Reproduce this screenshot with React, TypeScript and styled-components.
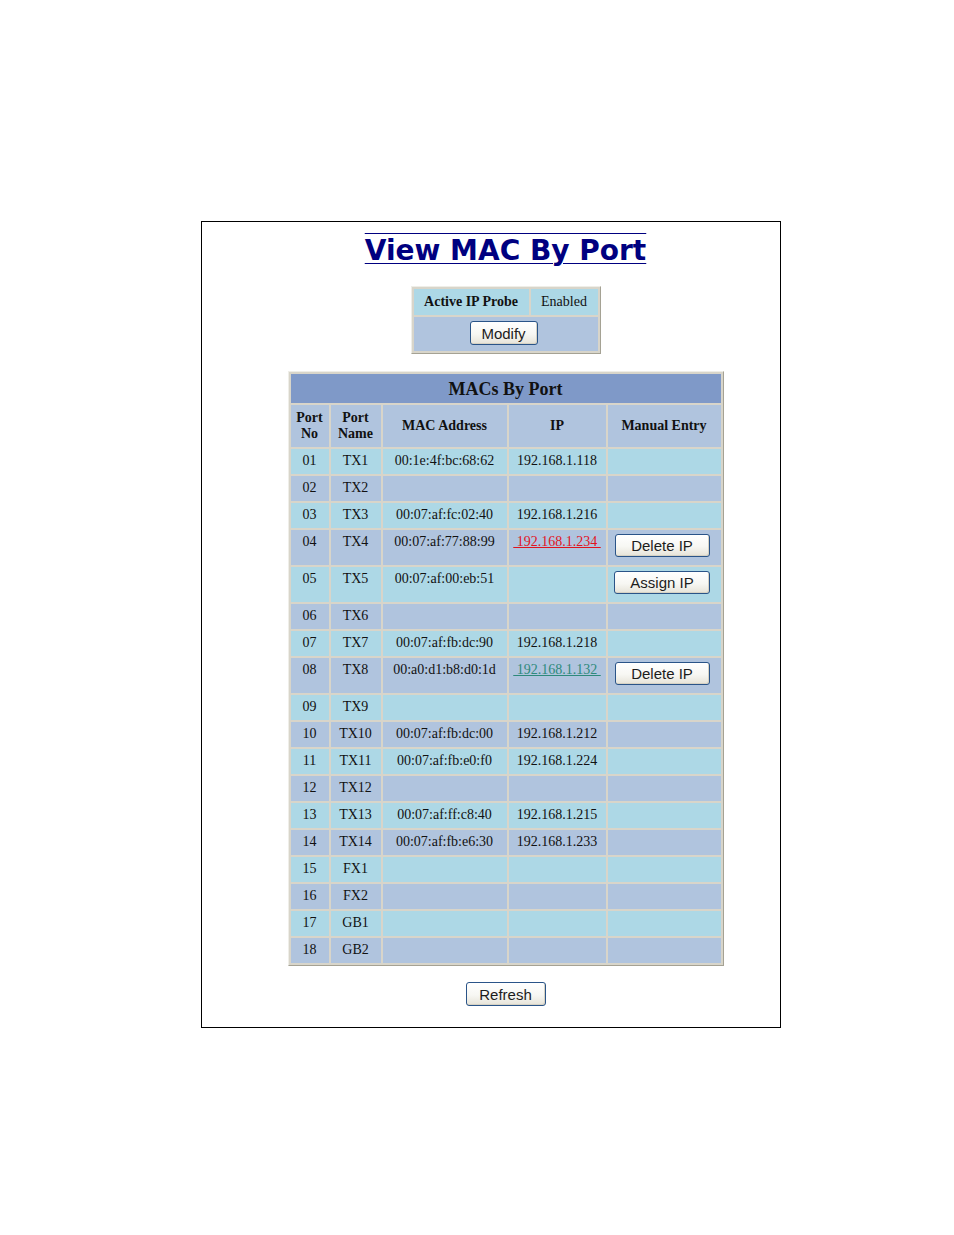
import React from "react";
import styled, { createGlobalStyle } from "styled-components";

const GlobalStyle = createGlobalStyle`
  html, body {
    margin: 0;
    padding: 0;
    background: #ffffff;
  }
  body {
    font-family: "Liberation Serif", "Times New Roman", serif;
    color: #000;
  }
`;

const LIGHT_BLUE = "#add8e6";
const STEEL_BLUE = "#b0c4de";
const TITLE_BLUE = "#7f99c8";

const Frame = styled.div`
  box-sizing: border-box;
  width: 580px;
  margin: 221px 0 0 201px;
  padding: 12px 0 21px 29px;
  border: 1px solid #000;
  display: flex;
  flex-direction: column;
  align-items: center;
`;

const PageTitle = styled.h1`
  margin: 0;
  font-family: "DejaVu Sans", Verdana, sans-serif;
  font-size: 28px;
  font-weight: bold;
  color: #000080;
  text-decoration: underline overline;
  text-decoration-thickness: 1px;
  text-underline-offset: 3px;
`;

const Grid = styled.table<{ $top: number }>`
  margin-top: ${(p) => p.$top}px;
  border-collapse: separate;
  border-spacing: 2px;
  background: #d8d5ca;
  border: 1px solid;
  border-color: #efeee8 #a5a294 #a5a294 #efeee8;
`;

const Cell = styled.td<{ $bg: string; $w?: number; $bold?: boolean }>`
  box-sizing: border-box;
  background: ${(p) => p.$bg};
  ${(p) => (p.$w ? `width: ${p.$w}px;` : "")}
  padding: 4px 2px 5px;
  font-size: 14px;
  line-height: 16px;
  font-weight: ${(p) => (p.$bold ? "bold" : "normal")};
  text-align: center;
  vertical-align: top;
  color: #111;
  white-space: nowrap;
`;

const HeadCell = styled(Cell).attrs({ as: "th" })`
  padding: 5px 2px;
  vertical-align: middle;
`;

const CaptionCell = styled.th`
  background: ${TITLE_BLUE};
  padding: 5px 2px 4px;
  font-size: 18px;
  line-height: 20px;
  font-weight: bold;
  color: #111;
  text-align: center;
`;

const ProbeCell = styled(Cell)`
  padding: 5px 4px;
  vertical-align: middle;
`;

const ActionCell = styled(Cell)`
  padding: 4px 9px 6px 5px;
`;

const Button = styled.button<{ $w: number }>`
  display: inline-block;
  vertical-align: top;
  box-sizing: border-box;
  width: ${(p) => p.$w}px;
  height: 24px;
  margin: 0;
  padding: 0;
  font-family: "Liberation Sans", Arial, sans-serif;
  font-size: 15px;
  color: #1c1c1c;
  border: 1px solid #2a5488;
  border-radius: 3px;
  background: linear-gradient(#ffffff 0%, #f7f7f3 55%, #e6e3d8 100%);
  box-shadow: inset -1px -1px 0 #d6d2c4;
  cursor: pointer;
`;

const RowButton = styled(Button)`
  height: 23px;
  margin: 0 0 2px;
`;

const IpLink = styled.a<{ $color: string }>`
  color: ${(p) => p.$color};
  text-decoration: underline;
  cursor: pointer;
`;

const RefreshBar = styled.div`
  margin-top: 16px;
  display: flex;
  justify-content: center;
`;

type Row = {
  no: string;
  name: string;
  mac?: string;
  ip?: string;
  link?: string;
  action?: string;
};

const rows: Row[] = [
  { no: "01", name: "TX1", mac: "00:1e:4f:bc:68:62", ip: "192.168.1.118" },
  { no: "02", name: "TX2" },
  { no: "03", name: "TX3", mac: "00:07:af:fc:02:40", ip: "192.168.1.216" },
  { no: "04", name: "TX4", mac: "00:07:af:77:88:99", ip: "192.168.1.234", link: "#e0141e", action: "Delete IP" },
  { no: "05", name: "TX5", mac: "00:07:af:00:eb:51", action: "Assign IP" },
  { no: "06", name: "TX6" },
  { no: "07", name: "TX7", mac: "00:07:af:fb:dc:90", ip: "192.168.1.218" },
  { no: "08", name: "TX8", mac: "00:a0:d1:b8:d0:1d", ip: "192.168.1.132", link: "#2e8a7c", action: "Delete IP" },
  { no: "09", name: "TX9" },
  { no: "10", name: "TX10", mac: "00:07:af:fb:dc:00", ip: "192.168.1.212" },
  { no: "11", name: "TX11", mac: "00:07:af:fb:e0:f0", ip: "192.168.1.224" },
  { no: "12", name: "TX12" },
  { no: "13", name: "TX13", mac: "00:07:af:ff:c8:40", ip: "192.168.1.215" },
  { no: "14", name: "TX14", mac: "00:07:af:fb:e6:30", ip: "192.168.1.233" },
  { no: "15", name: "FX1" },
  { no: "16", name: "FX2" },
  { no: "17", name: "GB1" },
  { no: "18", name: "GB2" },
];

function MacRow({ row, index }: { row: Row; index: number }) {
  const bg = index % 2 === 0 ? LIGHT_BLUE : STEEL_BLUE;
  return (
    <tr>
      <Cell $bg={bg}>{row.no}</Cell>
      <Cell $bg={bg}>{row.name}</Cell>
      <Cell $bg={bg}>{row.mac}</Cell>
      <Cell $bg={bg}>
        {row.link ? (
          <IpLink $color={row.link}>{`\u00a0${row.ip}\u00a0`}</IpLink>
        ) : (
          row.ip
        )}
      </Cell>
      {row.action ? (
        <ActionCell $bg={bg}>
          <RowButton $w={row.action === "Assign IP" ? 96 : 95}>{row.action}</RowButton>
        </ActionCell>
      ) : (
        <Cell $bg={bg} />
      )}
    </tr>
  );
}

export default function App() {
  return (
    <>
      <GlobalStyle />
      <Frame>
        <PageTitle>View MAC By Port</PageTitle>

        <Grid $top={19}>
          <tbody>
            <tr>
              <ProbeCell $bg={LIGHT_BLUE} $w={115} $bold>
                Active IP Probe
              </ProbeCell>
              <ProbeCell $bg={LIGHT_BLUE} $w={67}>
                Enabled
              </ProbeCell>
            </tr>
            <tr>
              <ActionCell $bg={STEEL_BLUE} colSpan={2}>
                <Button $w={68}>Modify</Button>
              </ActionCell>
            </tr>
          </tbody>
        </Grid>

        <Grid $top={17}>
          <thead>
            <tr>
              <CaptionCell colSpan={5}>MACs By Port</CaptionCell>
            </tr>
            <tr>
              <HeadCell $bg={STEEL_BLUE} $w={38} $bold>
                Port
                <br />
                No
              </HeadCell>
              <HeadCell $bg={STEEL_BLUE} $w={50} $bold>
                Port
                <br />
                Name
              </HeadCell>
              <HeadCell $bg={STEEL_BLUE} $w={124} $bold>
                MAC Address
              </HeadCell>
              <HeadCell $bg={STEEL_BLUE} $w={97} $bold>
                IP
              </HeadCell>
              <HeadCell $bg={STEEL_BLUE} $w={113} $bold>
                Manual Entry
              </HeadCell>
            </tr>
          </thead>
          <tbody>
            {rows.map((row, i) => (
              <MacRow key={row.no} row={row} index={i} />
            ))}
          </tbody>
        </Grid>

        <RefreshBar>
          <Button $w={80}>Refresh</Button>
        </RefreshBar>
      </Frame>
    </>
  );
}
